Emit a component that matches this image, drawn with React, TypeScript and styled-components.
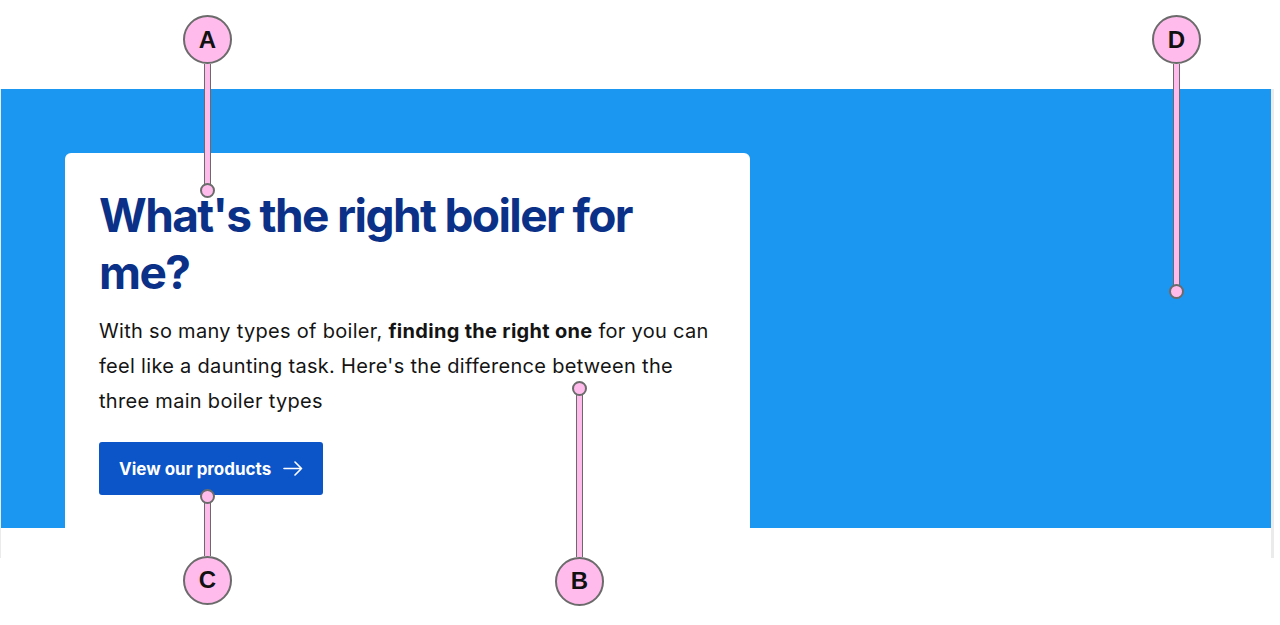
import React from "react";
import styled, { createGlobalStyle } from "styled-components";

const GlobalStyle = createGlobalStyle`
  html, body {
    margin: 0;
    padding: 0;
    background: #ffffff;
  }
  body {
    font-family: Inter, "Noto Sans", "Liberation Sans", sans-serif;
    -webkit-font-smoothing: antialiased;
  }
`;

const Page = styled.div`
  position: relative;
  width: 1280px;
  height: 625px;
  padding-top: 89px;
  box-sizing: border-box;
  overflow: hidden;
`;

const Hero = styled.section`
  width: 1274px;
  box-sizing: border-box;
  border-left: 1px solid #ebebeb;
  border-right: 3px solid #ebebeb;
  padding: 64px 0 0 64px;
  background: linear-gradient(to bottom, #1b97f2 0, #1b97f2 439px, #ffffff 439px);
`;

const Card = styled.div`
  width: 685px;
  height: 405px;
  box-sizing: border-box;
  background: #ffffff;
  border-radius: 6px 6px 0 0;
  padding: 34px 34px 0 34px;
  display: flex;
  flex-direction: column;
  align-items: flex-start;
`;

const Heading = styled.h1`
  margin: 0;
  max-width: 600px;
  font-family: Inter, "Noto Sans", sans-serif;
  font-weight: 700;
  font-size: 46px;
  line-height: 57px;
  letter-spacing: -1.6px;
  color: #0a3187;
`;

const Lead = styled.p`
  margin: 13px 0 0 0;
  font-family: Inter, "Noto Sans", sans-serif;
  font-size: 20px;
  line-height: 35px;
  letter-spacing: 0.3px;
  color: #141414;

  strong {
    font-weight: 700;
  }
`;

const Button = styled.a`
  margin-top: 23px;
  display: inline-flex;
  align-items: center;
  gap: 12px;
  height: 53px;
  box-sizing: border-box;
  padding: 0 20px 0 20px;
  background: #0c55c9;
  border-radius: 3px;
  color: #ffffff;
  font-family: Inter, "Noto Sans", sans-serif;
  font-weight: 700;
  font-size: 17px;
  letter-spacing: 0;
  text-decoration: none;
`;

const Marker = styled.div<{ $x: number; $top: number; $up?: boolean }>`
  position: absolute;
  left: ${(p) => p.$x - 25}px;
  top: ${(p) => p.$top}px;
  width: 50px;
  display: flex;
  flex-direction: ${(p) => (p.$up ? "column-reverse" : "column")};
  align-items: center;
  z-index: 5;
`;

const Bubble = styled.div`
  width: 49px;
  height: 49px;
  box-sizing: border-box;
  border-radius: 50%;
  border: 2px solid #6b6b6b;
  background: #ffbbec;
  display: flex;
  align-items: center;
  justify-content: center;
  font-family: "Liberation Sans", Arial, sans-serif;
  font-weight: 700;
  font-size: 24px;
  color: #111111;
  flex: none;
`;

const Stem = styled.div<{ $len: number }>`
  width: 7px;
  height: ${(p) => p.$len}px;
  box-sizing: border-box;
  border-left: 1.5px solid #6b6b6b;
  border-right: 1.5px solid #6b6b6b;
  background: #ffbbec;
  flex: none;
`;

const Dot = styled.div<{ $up?: boolean }>`
  width: 15px;
  height: 15px;
  box-sizing: border-box;
  border-radius: 50%;
  border: 2px solid #6b6b6b;
  background: #ffbbec;
  flex: none;
  margin: ${(p) => (p.$up ? "0 0 -3px 0" : "-3px 0 0 0")};
  position: relative;
`;

const Arrow = () => (
  <svg width="20" height="15" viewBox="0 0 20 15" fill="none">
    <path
      d="M1 7.5H18.5M12 1L18.5 7.5L12 14"
      stroke="#ffffff"
      strokeWidth="1.6"
      strokeLinecap="round"
      strokeLinejoin="round"
    />
  </svg>
);

type Note = { letter: string; x: number; top: number; len: number; up?: boolean };

const notes: Note[] = [
  { letter: "A", x: 207.5, top: 15, len: 122 },
  { letter: "D", x: 1176.5, top: 15, len: 223 },
  { letter: "C", x: 207.5, top: 488.5, len: 55, up: true },
  { letter: "B", x: 579.5, top: 380.5, len: 164, up: true },
];

export default function App() {
  return (
    <>
      <GlobalStyle />
      <Page>
        <Hero>
          <Card>
            <Heading>What's the right boiler for me?</Heading>
            <Lead>
              With so many types of boiler, <strong>finding the right one</strong> for you can
              feel like a daunting task. Here's the difference between the three main boiler
              types
            </Lead>
            <Button href="#">
              View our products
              <Arrow />
            </Button>
          </Card>
        </Hero>
        {notes.map((n) => (
          <Marker key={n.letter} $x={n.x} $top={n.top} $up={n.up}>
            <Bubble>{n.letter}</Bubble>
            <Stem $len={n.len} />
            <Dot $up={n.up} />
          </Marker>
        ))}
      </Page>
    </>
  );
}
